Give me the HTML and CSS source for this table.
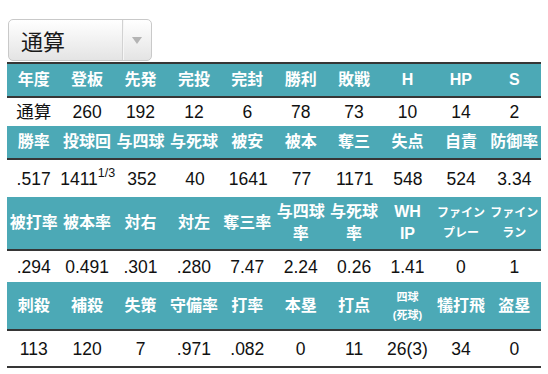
FILE: index.html
```html
<!DOCTYPE html>
<html lang="ja">
<head>
<meta charset="utf-8">
<link rel="stylesheet" href="styles.css">
</head>
<body>
<div class="page">
  <div class="select">
    <span class="select-label">通算</span>
    <span class="select-btn"><span class="select-arrow"></span></span>
  </div>
  <div class="stats">
    <div class="row head h1">
      <div>年度</div><div>登板</div><div>先発</div><div>完投</div><div>完封</div><div>勝利</div><div>敗戦</div><div>H</div><div>HP</div><div>S</div>
    </div>
    <div class="row data d1">
      <div>通算</div><div>260</div><div>192</div><div>12</div><div>6</div><div>78</div><div>73</div><div>10</div><div>14</div><div>2</div>
    </div>
    <div class="row head h2">
      <div>勝率</div><div>投球回</div><div>与四球</div><div>与死球</div><div>被安</div><div>被本</div><div>奪三</div><div>失点</div><div>自責</div><div>防御率</div>
    </div>
    <div class="row data d2">
      <div>.517</div><div>1411<sup class="frac">1/3</sup></div><div>352</div><div>40</div><div>1641</div><div>77</div><div>1171</div><div>548</div><div>524</div><div>3.34</div>
    </div>
    <div class="row head h3">
      <div>被打率</div><div>被本率</div><div>対右</div><div>対左</div><div>奪三率</div><div>与四球<br>率</div><div>与死球<br>率</div><div>WH<br>IP</div><div class="small">ファイン<br>プレー</div><div class="small">ファイン<br>ラン</div>
    </div>
    <div class="row data d3">
      <div>.294</div><div>0.491</div><div>.301</div><div>.280</div><div>7.47</div><div>2.24</div><div>0.26</div><div>1.41</div><div>0</div><div>1</div>
    </div>
    <div class="row head h4">
      <div>刺殺</div><div>補殺</div><div>失策</div><div>守備率</div><div>打率</div><div>本塁</div><div>打点</div><div class="tiny">四球<br>(死球)</div><div>犠打飛</div><div>盗塁</div>
    </div>
    <div class="row data d4 last">
      <div>113</div><div>120</div><div>7</div><div>.971</div><div>.082</div><div>0</div><div>11</div><div>26(3)</div><div>34</div><div>0</div>
    </div>
  </div>
</div>
</body>
</html>
```

FILE: styles.css
```css
* { box-sizing: border-box; }

html, body {
  margin: 0;
  padding: 0;
  background: #ffffff;
}

body {
  font-family: "Liberation Sans", "Noto Sans CJK JP", sans-serif;
  color: #111111;
}

.page {
  padding: 19px 7px 0 7px;
}

.select {
  display: flex;
  width: 144px;
  height: 42px;
  margin-left: 1px;
  margin-bottom: 1px;
  border: 1px solid #c9c9c9;
  border-radius: 5px;
  background: linear-gradient(#ffffff, #e4e4e4);
  overflow: hidden;
}

.select-label {
  flex: 1;
  display: flex;
  align-items: center;
  padding-left: 12px;
  font-size: 22px;
  color: #1a1a1a;
}

.select-btn {
  width: 29px;
  display: flex;
  align-items: center;
  justify-content: center;
  border-left: 1px solid #d2d2d2;
  box-shadow: inset 1px 0 0 #f6f6f6;
}

.select-arrow {
  width: 0;
  height: 0;
  border-left: 5px solid transparent;
  border-right: 5px solid transparent;
  border-top: 7px solid #b4b4b4;
  margin-top: 1px;
}

.stats {
  width: 534px;
}

.row {
  display: grid;
  grid-template-columns: repeat(10, 1fr);
  align-items: center;
  text-align: center;
}

.row > div {
  white-space: nowrap;
}

.head {
  background: #4ca9b6;
  color: #ffffff;
  font-weight: bold;
  font-size: 16px;
  line-height: 22px;
  border-top: 2px solid #363636;
  border-bottom: 2px solid #363636;
}

.data + .head {
  border-top: 0;
}

.data {
  font-size: 17.5px;
  line-height: 22px;
  color: #111111;
}

.h1 { height: 36px; }
.d1 { height: 28px; }
.h2 { height: 34px; }
.d2 { height: 37px; }
.h3 { height: 54px; }
.d3 { height: 31px; }
.h4 { height: 49px; }
.d4 { height: 37px; }

.last {
  border-bottom: 2px solid #363636;
}

.small {
  font-size: 12px;
  line-height: 20px;
}

.tiny {
  font-size: 11px;
  line-height: 18px;
}

.frac {
  font-size: 12.5px;
  line-height: 0;
  vertical-align: 8px;
}
```
